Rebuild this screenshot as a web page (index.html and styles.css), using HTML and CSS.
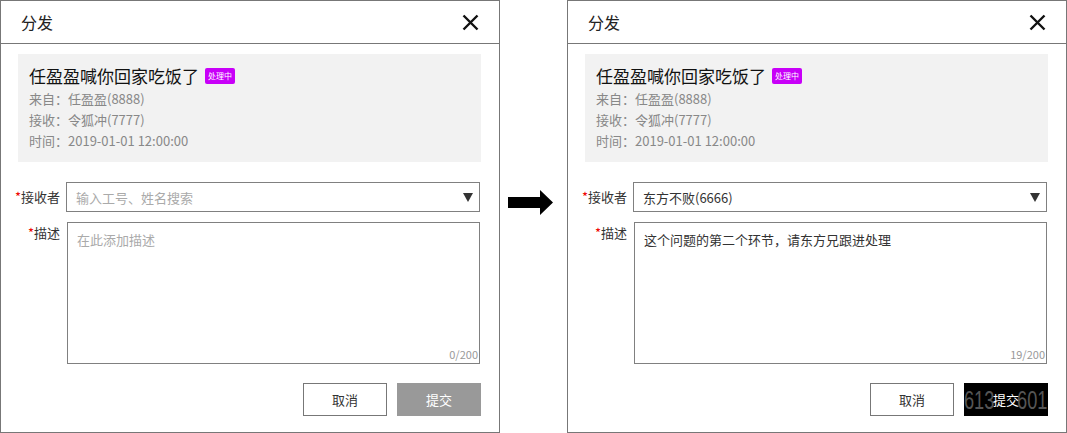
FILE: index.html
```html
<!DOCTYPE html>
<html lang="zh-CN">
<head>
	<meta charset="UTF-8">
	<title>分发</title>
	<link rel="stylesheet" href="styles.css">
</head>
<body>
	<div class="page">
		<!-- 分发前 -->
		<div class="dialog">
			<div class="dialog-head">
				<span class="dialog-title">分发</span>
				<span class="dialog-close">
					<svg width="17" height="17" viewBox="0 0 17 17"><path d="M1.5 1.5 L15.5 15.5 M15.5 1.5 L1.5 15.5" stroke="#111" stroke-width="2.4" fill="none"/></svg>
				</span>
			</div>
			<div class="dialog-body">
				<div class="info-card">
					<div class="info-title">任盈盈喊你回家吃饭了<span class="badge">处理中</span></div>
					<p class="info-line">来自：任盈盈(8888)</p>
					<p class="info-line">接收：令狐冲(7777)</p>
					<p class="info-line">时间：2019-01-01 12:00:00</p>
				</div>
				<div class="form-row">
					<label class="form-label"><i>*</i>接收者</label>
					<div class="select">
						<span class="select-text placeholder">输入工号、姓名搜索</span>
						<span class="select-arrow"></span>
					</div>
				</div>
				<div class="form-row form-row-top">
					<label class="form-label"><i>*</i>描述</label>
					<div class="textarea">
						<span class="placeholder">在此添加描述</span>
						<span class="counter">0/200</span>
					</div>
				</div>
				<div class="form-btns">
					<button class="btn btn-cancel">取消</button>
					<button class="btn btn-disabled">提交</button>
				</div>
			</div>
		</div>

		<div class="arrow">
			<svg width="46" height="26" viewBox="0 0 46 26"><polygon points="0,7 32,7 32,0 45,12.5 32,25 32,18 0,18" fill="#000"/></svg>
		</div>

		<!-- 分发后 -->
		<div class="dialog">
			<div class="dialog-head">
				<span class="dialog-title">分发</span>
				<span class="dialog-close">
					<svg width="17" height="17" viewBox="0 0 17 17"><path d="M1.5 1.5 L15.5 15.5 M15.5 1.5 L1.5 15.5" stroke="#111" stroke-width="2.4" fill="none"/></svg>
				</span>
			</div>
			<div class="dialog-body">
				<div class="info-card">
					<div class="info-title">任盈盈喊你回家吃饭了<span class="badge">处理中</span></div>
					<p class="info-line">来自：任盈盈(8888)</p>
					<p class="info-line">接收：令狐冲(7777)</p>
					<p class="info-line">时间：2019-01-01 12:00:00</p>
				</div>
				<div class="form-row">
					<label class="form-label"><i>*</i>接收者</label>
					<div class="select">
						<span class="select-text">东方不败(6666)</span>
						<span class="select-arrow"></span>
					</div>
				</div>
				<div class="form-row form-row-top">
					<label class="form-label"><i>*</i>描述</label>
					<div class="textarea">
						<span class="value">这个问题的第二个环节，请东方兄跟进处理</span>
						<span class="counter">19/200</span>
					</div>
				</div>
				<div class="form-btns">
					<button class="btn btn-cancel">取消</button>
					<button class="btn btn-primary"><span class="wm wm-l">613</span><span class="wm wm-r">601</span><span class="btn-text">提交</span></button>
				</div>
			</div>
		</div>
	</div>
</body>
</html>
```

FILE: styles.css
```css
html,body,div,span,p,i,label,button{
	padding: 0;
	margin: 0;
	border: 0;
}
body{
	background: #fff;
	font-family: "Noto Sans CJK SC", "Liberation Sans", sans-serif;
	color: #333;
}
.page{
	display: flex;
	align-items: flex-start;
}
.dialog{
	width: 500px;
	height: 433px;
	box-sizing: border-box;
	border: 1px solid #777;
}
.dialog-head{
	height: 42px;
	border-bottom: 1px solid #777;
	display: flex;
	align-items: center;
	justify-content: space-between;
	padding: 0 20px 0 20px;
}
.dialog-title{
	font-size: 16px;
	color: #222;
}
.dialog-close{
	display: flex;
	margin-top: 1px;
}
.dialog-body{
	padding: 10px 18px 0 17px;
}
.info-card{
	background: #f2f2f2;
	padding: 10px 11px 11px;
}
.info-title{
	font-size: 17px;
	line-height: 24px;
	color: #111;
	display: flex;
	align-items: center;
}
.badge{
	display: inline-block;
	margin-left: 6px;
	padding: 0 3px;
	height: 16px;
	line-height: 16px;
	font-size: 8px;
	color: #fff;
	background: #c800f8;
	border-radius: 2px;
}
.info-line{
	font-size: 13px;
	line-height: 21px;
	color: #888;
}
.form-row{
	display: flex;
	align-items: center;
	margin-top: 20px;
}
.form-row-top{
	align-items: flex-start;
	margin-top: 10px;
}
.form-label{
	width: 52px;
	margin-left: -10px;
	text-align: right;
	white-space: nowrap;
	font-size: 13px;
	line-height: 18px;
	color: #333;
	flex-shrink: 0;
}
.form-label i{
	font-style: normal;
	color: #e00;
}
.form-row-top .form-label{
	margin-top: 2px;
}
.select{
	margin-left: 6px;
	width: 414px;
	height: 30px;
	box-sizing: border-box;
	border: 1px solid #808080;
	display: flex;
	align-items: center;
	justify-content: space-between;
	padding: 0 6px 0 9px;
}
.select-text{
	font-size: 13px;
	color: #333;
}
.placeholder{
	font-size: 13px;
	color: #aaa;
}
.select-arrow{
	width: 0;
	height: 0;
	border-left: 5px solid transparent;
	border-right: 5px solid transparent;
	border-top: 9px solid #333;
}
.textarea{
	position: relative;
	margin-left: 7px;
	width: 413px;
	height: 142px;
	box-sizing: border-box;
	border: 1px solid #808080;
	padding: 8px 9px;
	font-size: 13px;
	line-height: 18px;
}
.textarea .value{
	color: #333;
}
.counter{
	position: absolute;
	right: 1px;
	bottom: 2px;
	font-size: 11px;
	line-height: 13px;
	color: #999;
}
.form-btns{
	display: flex;
	justify-content: flex-end;
	margin-top: 19px;
}
.btn{
	position: relative;
	width: 84px;
	height: 33px;
	box-sizing: border-box;
	margin-left: 10px;
	font-family: "Noto Sans CJK SC", sans-serif;
	font-size: 13px;
	overflow: hidden;
}
.btn-cancel{
	background: #fff;
	border: 1px solid #777;
	color: #333;
}
.btn-disabled{
	background: #999;
	color: #fff;
}
.btn-primary{
	background: #000;
	color: #fff;
}
.btn-text{
	position: relative;
}
.wm{
	position: absolute;
	top: 1px;
	font-family: "Liberation Sans", sans-serif;
	font-size: 26px;
	line-height: 33px;
	color: #555;
	transform: scaleX(0.7);
}
.wm-l{
	left: 0;
	transform-origin: left center;
}
.wm-r{
	right: 1px;
	transform-origin: right center;
}
.arrow{
	width: 67px;
	padding: 190px 0 0 8px;
	box-sizing: border-box;
	display: flex;
}
```
